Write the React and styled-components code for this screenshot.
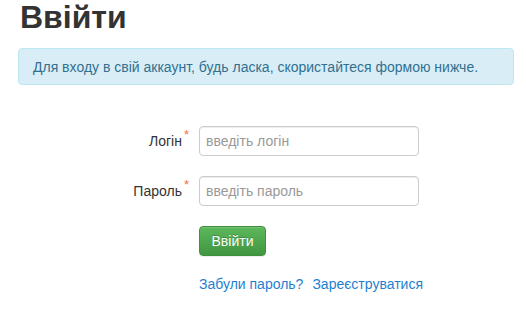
import React from 'react'
import styled, { createGlobalStyle } from 'styled-components'

const GlobalStyle = createGlobalStyle`
    body {
        margin: 0;
        background: #fff;
        font-family: "Liberation Sans", Arial, sans-serif;
        font-size: 14px;
        color: #333;
    }
`

const Page = styled.div`
    width: 496px;
    padding: 0 12px 0 18px;
`

const Title = styled.h1`
    margin: 0 0 13px 2px;
    font-size: 32px;
    line-height: 35px;
    font-weight: bold;
    color: #333;
`

const Alert = styled.div`
    box-sizing: border-box;
    height: 37px;
    padding: 0 14px;
    display: flex;
    align-items: center;
    background: #d9edf7;
    border: 1px solid #bce8f1;
    border-radius: 4px;
    color: #31708f;
    font-size: 14px;
`

const Form = styled.form`
    margin-top: 41px;
    display: grid;
    grid-template-columns: 171px 220px;
    column-gap: 10px;
    row-gap: 20px;
    align-items: center;
`

const Label = styled.label`
    justify-self: end;
    display: flex;
    align-items: flex-start;
    gap: 2px;
    color: #333;
    font-size: 14px;
    line-height: 20px;
    span {
        color: #f0744a;
        font-size: 13px;
        line-height: 10px;
        margin-top: -1px;
    }
`

const Input = styled.input`
    box-sizing: border-box;
    width: 220px;
    height: 30px;
    padding: 0 6px;
    border: 1px solid #ccc;
    border-radius: 4px;
    box-shadow: inset 0 1px 1px rgba(0, 0, 0, 0.075);
    font-family: "Liberation Sans", Arial, sans-serif;
    font-size: 14px;
    color: #555;
    outline: none;
    &::placeholder {
        color: #999;
    }
`

const Button = styled.button`
    grid-column: 2;
    justify-self: start;
    box-sizing: border-box;
    width: 67px;
    height: 30px;
    padding: 0;
    border: 1px solid #3e8f3e;
    border-radius: 4px;
    background: linear-gradient(to bottom, #5cb85c 0%, #419641 100%);
    box-shadow: inset 0 1px 0 rgba(255, 255, 255, 0.15), 0 1px 1px rgba(0, 0, 0, 0.075);
    color: #fff;
    font-family: "Liberation Sans", Arial, sans-serif;
    font-size: 14px;
    text-shadow: 0 -1px 0 rgba(0, 0, 0, 0.2);
`

const Links = styled.div`
    grid-column: 2;
    display: flex;
    gap: 9px;
    margin-top: 0px;
    white-space: nowrap;
    a {
        color: #1f7fcf;
        text-decoration: none;
        font-size: 14px;
    }
`

export default function App() {
    return (
        <>
            <GlobalStyle />
            <Page>
                <Title>Ввійти</Title>
                <Alert>Для входу в свій аккаунт, будь ласка, скористайтеся формою нижче.</Alert>
                <Form onSubmit={e => e.preventDefault()}>
                    <Label>Логін<span>*</span></Label>
                    <Input placeholder="введіть логін" />
                    <Label>Пароль<span>*</span></Label>
                    <Input type="password" placeholder="введіть пароль" />
                    <Button>Ввійти</Button>
                    <Links>
                        <a href="#">Забули пароль?</a>
                        <a href="#">Зареєструватися</a>
                    </Links>
                </Form>
            </Page>
        </>
    )
}
